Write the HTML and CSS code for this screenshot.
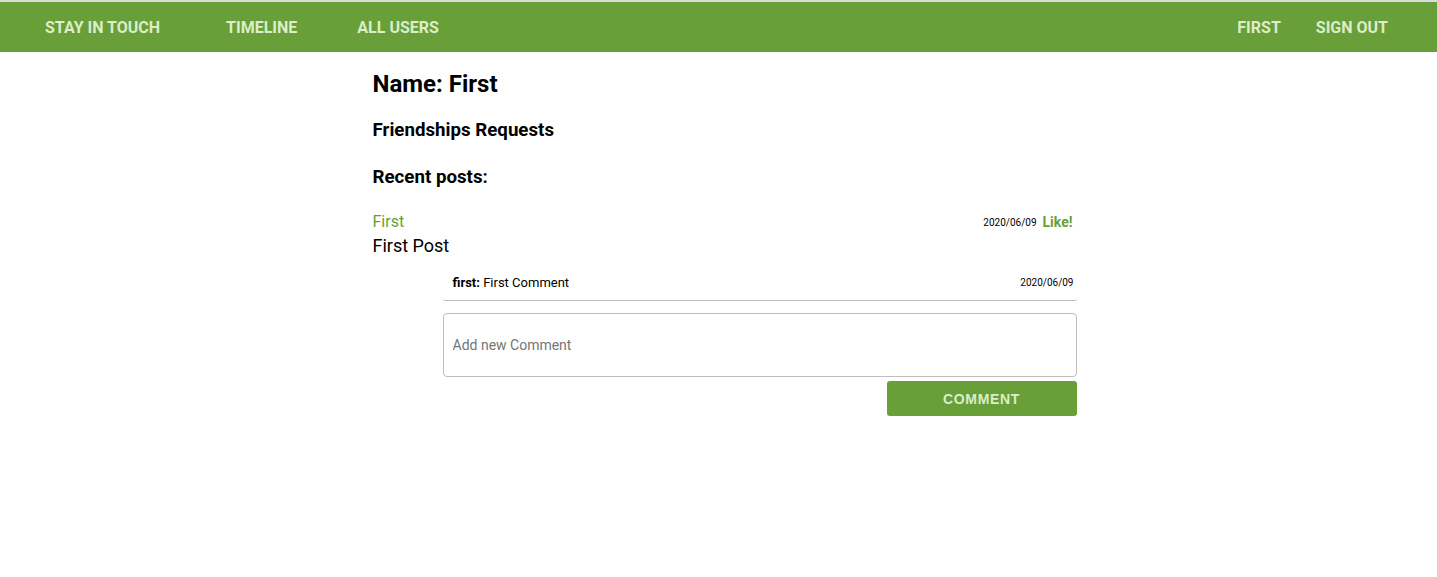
FILE: index.html
```html
<!DOCTYPE html>
<html>
<head>
<meta charset="utf-8">
<link rel="stylesheet" href="styles.css">
</head>
<body>
<nav class="navbar">
  <div class="nav-left">
    <a class="brand" href="#">STAY IN TOUCH</a>
    <a class="nav-link" href="#">TIMELINE</a>
    <a class="nav-link" href="#">ALL USERS</a>
  </div>
  <div class="nav-right">
    <a class="nav-link" href="#">FIRST</a>
    <a class="nav-link" href="#">SIGN OUT</a>
  </div>
</nav>
<main class="content">
  <h2 class="name">Name: First</h2>
  <h3 class="section">Friendships Requests</h3>
  <h3 class="section">Recent posts:</h3>
  <div class="post">
    <div class="post-head">
      <a class="author" href="#">First</a>
      <div class="meta"><span class="date">2020/06/09</span><a class="like" href="#">Like!</a></div>
    </div>
    <p class="post-body">First Post</p>
    <div class="comments">
      <div class="comment">
        <span class="comment-text"><b>first:</b> First Comment</span>
        <span class="date">2020/06/09</span>
      </div>
      <form class="comment-form">
        <input class="comment-input" type="text" placeholder="Add new Comment">
        <button class="comment-btn" type="button">COMMENT</button>
      </form>
    </div>
  </div>
</main>
</body>
</html>
```
FILE: styles.css
```css
html, body {
  margin: 0;
  padding: 0;
  background: #fff;
  font-family: Roboto, "Liberation Sans", sans-serif;
  color: #000;
}
body {
  border-top: 2px solid #dcdcdc;
}
.navbar {
  height: 50px;
  background: #689f38;
  display: flex;
  justify-content: space-between;
  align-items: center;
}
.nav-left, .nav-right {
  display: flex;
  align-items: center;
}
.nav-left {
  padding-left: 45px;
}
.nav-right {
  padding-right: 49px;
  gap: 35px;
}
.navbar a {
  color: #dcedc8;
  text-decoration: none;
  font-weight: 700;
  font-size: 16px;
}
.brand {
  margin-right: 36px;
}
.nav-left .nav-link {
  margin-left: 30px;
  margin-right: 30px;
}
.content {
  width: 704px;
  margin: 0 auto;
  padding-top: 17px;
  position: relative;
  left: 6px;
}
.name {
  font-size: 24px;
  font-weight: 700;
  margin: 0 0 19px 0;
  line-height: 30px;
}
.section {
  font-size: 18.72px;
  font-weight: 700;
  margin: 0 0 23px 0;
  line-height: 24px;
}
.post {
  margin-top: 0;
}
.post-head {
  display: flex;
  justify-content: space-between;
  align-items: center;
}
.author {
  color: #689f38;
  text-decoration: none;
  font-size: 16px;
  line-height: 20px;
}
.meta {
  display: flex;
  align-items: center;
  gap: 6px;
  padding-right: 4px;
}
.date {
  font-size: 10px;
  color: #000;
}
.like {
  color: #689f38;
  font-weight: 700;
  font-size: 14px;
  text-decoration: none;
}
.post-body {
  margin: 2px 0 0 0;
  font-size: 18px;
  line-height: 24px;
}
.comments {
  margin-left: 70px;
  margin-top: 11px;
}
.comment {
  display: flex;
  justify-content: space-between;
  align-items: center;
  padding: 6px 3px 10px 10px;
  border-bottom: 1px solid #bdbdbd;
  border-radius: 0 0 3px 3px;
  font-size: 13px;
}
.comment-text b {
  font-weight: 700;
}
.comment-form {
  display: flex;
  flex-direction: column;
  align-items: flex-end;
  margin-top: 12px;
  gap: 4px;
}
.comment-input {
  box-sizing: border-box;
  width: 100%;
  height: 64px;
  border: 1px solid #bdbdbd;
  border-radius: 4px;
  padding: 0 9px;
  font-family: Roboto, "Liberation Sans", sans-serif;
  font-size: 14px;
  outline: none;
}
.comment-input::placeholder {
  color: #757575;
}
.comment-btn {
  width: 190px;
  height: 35px;
  background: #689f38;
  border: none;
  border-radius: 3px;
  color: #dcedc8;
  font-family: "Liberation Sans", Arial, sans-serif;
  font-weight: 700;
  font-size: 14px;
  letter-spacing: 0.7px;
}
```
